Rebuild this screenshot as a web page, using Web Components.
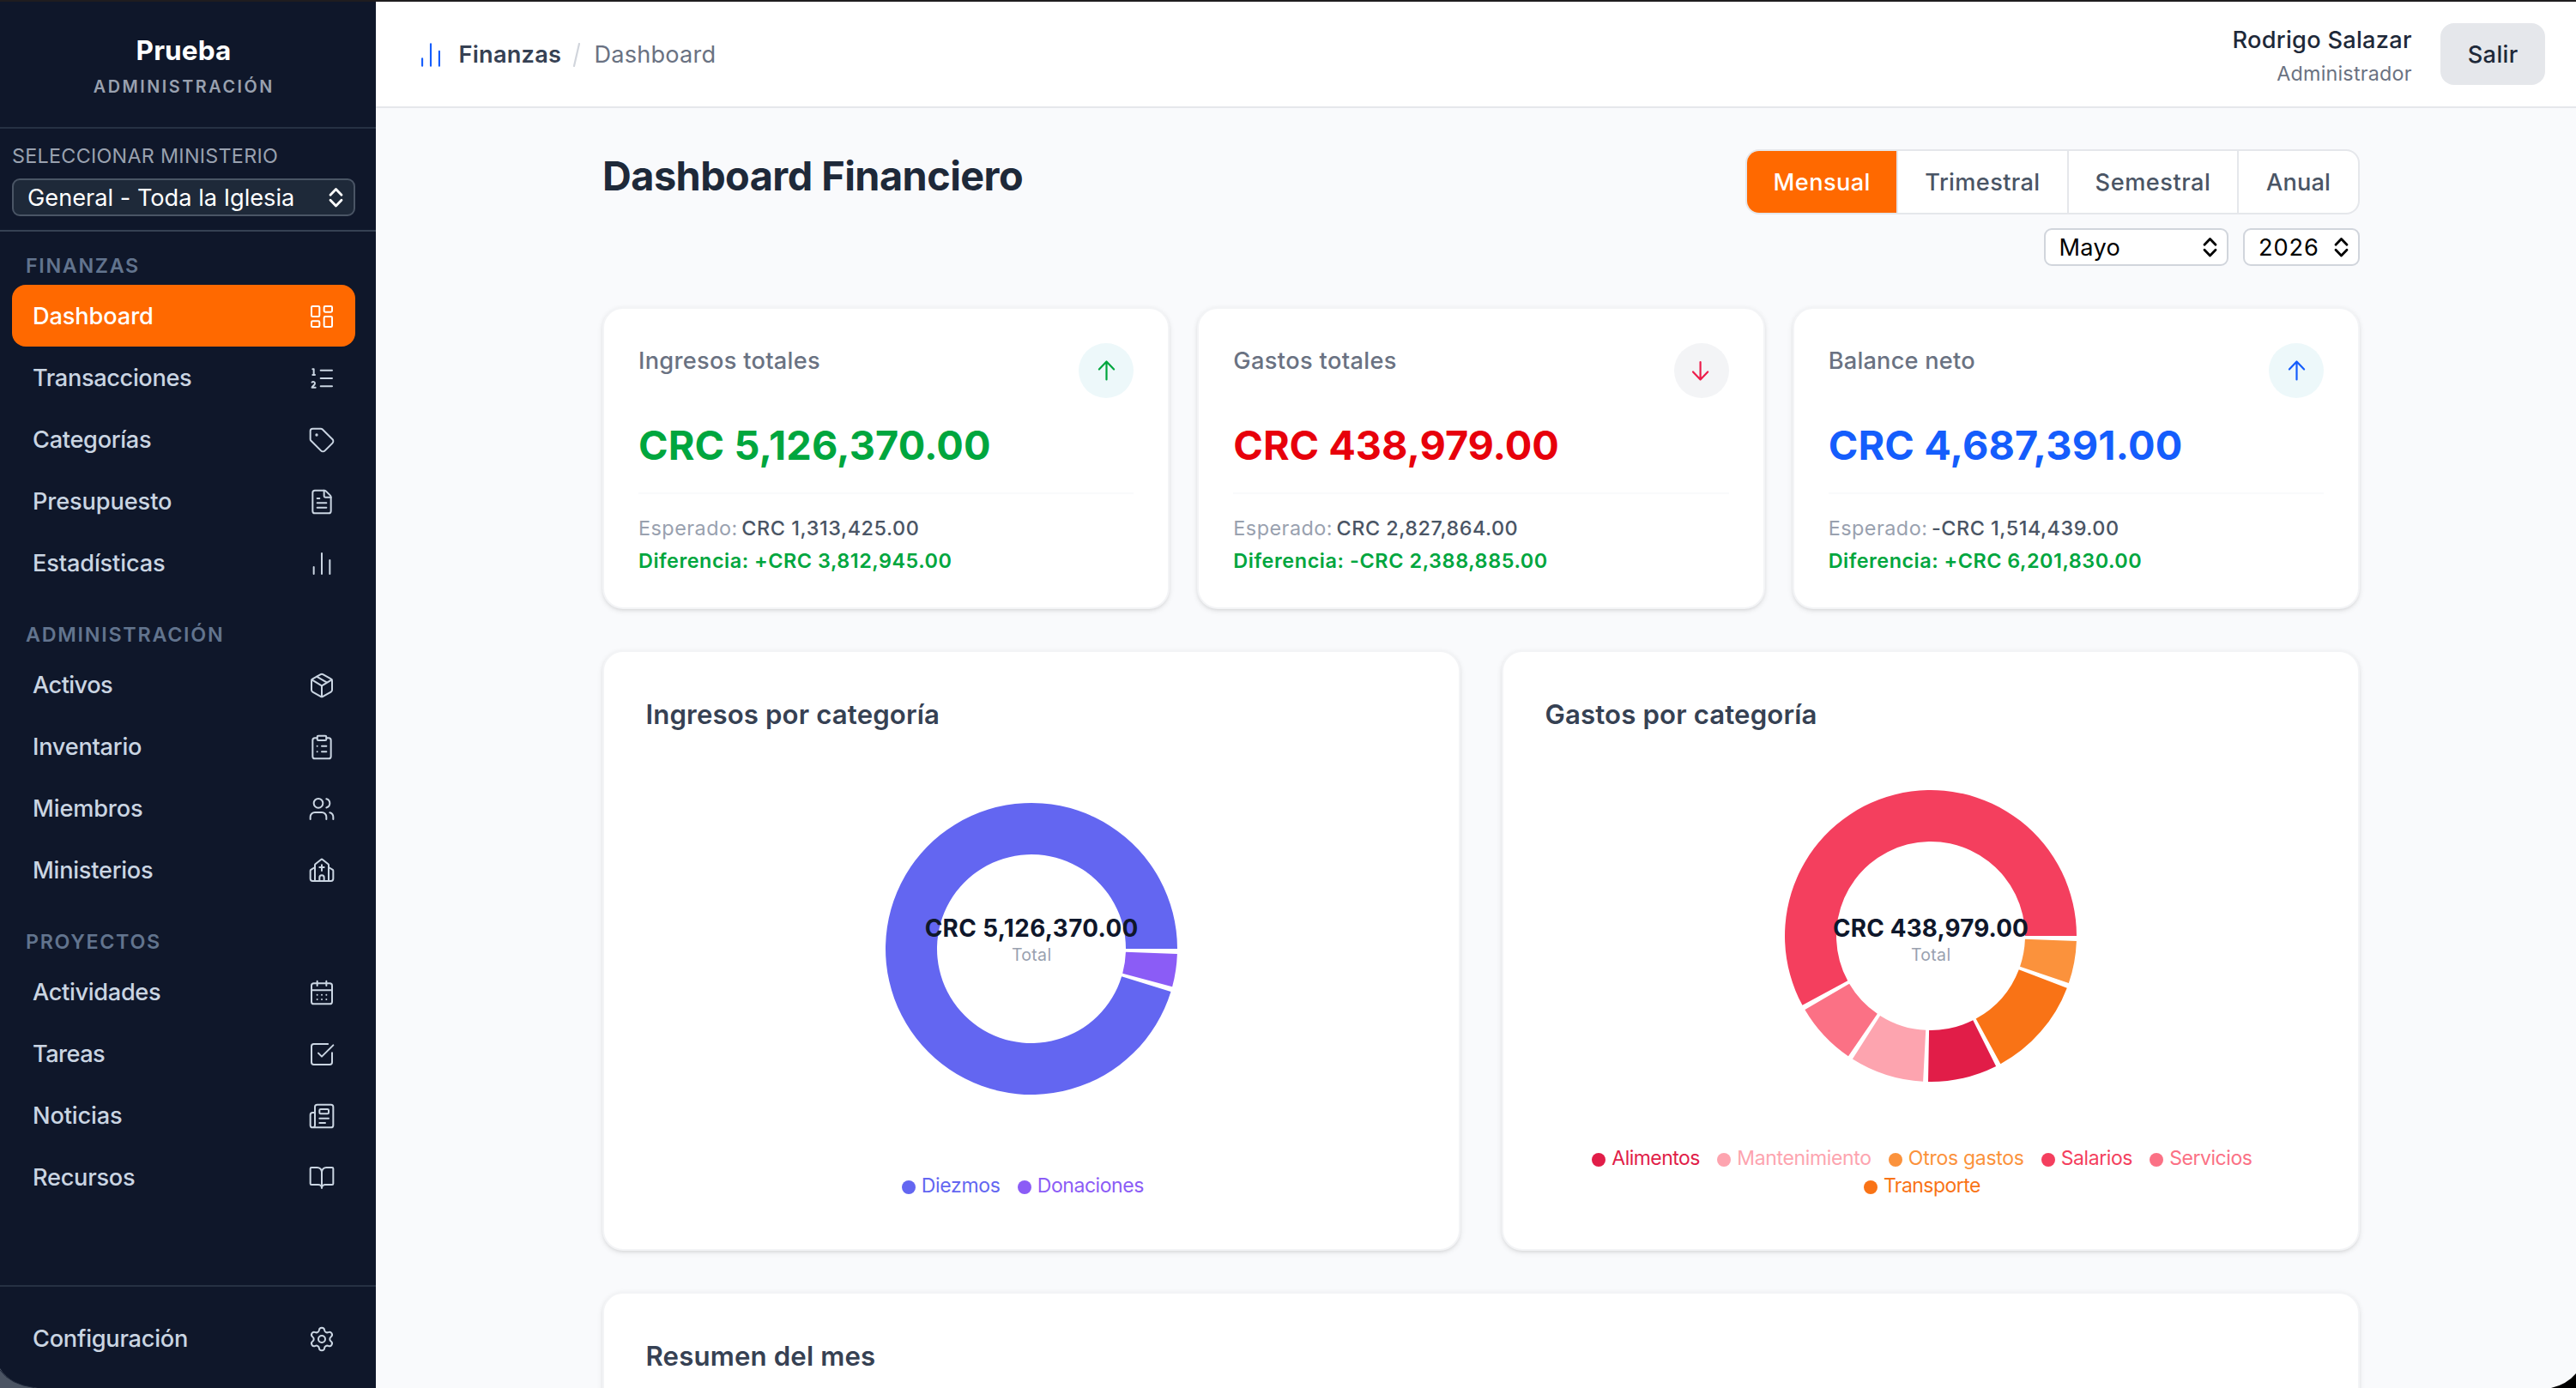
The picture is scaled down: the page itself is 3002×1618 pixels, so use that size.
<!DOCTYPE html>
<html lang="es">
<head>
<meta charset="utf-8">
<title>Dashboard Financiero</title>
<style>
html,body{margin:0;height:100%}
body{width:3002px;height:1618px;overflow:hidden;background:#f9fafc;font-family:Inter,"Liberation Sans",sans-serif;-webkit-font-smoothing:antialiased}
</style>
</head>
<body>
<app-shell>
  <side-bar slot="side"></side-bar>
  <top-bar slot="top"></top-bar>
  <finance-dashboard></finance-dashboard>
</app-shell>
<script>
const define = (name, css, html, after) => customElements.define(name, class extends HTMLElement {
  connectedCallback() {
    if (this.shadowRoot) return;
    const root = this.attachShadow({ mode: 'open' });
    root.innerHTML = `<style>*{box-sizing:border-box}${css}</style>` + (typeof html === 'function' ? html(this) : html);
    if (after) after(this, root);
  }
});

/* Tracks its text so that the inked width equals the w attribute. */
const pen = document.createElement('canvas').getContext('2d');
define('fit-text', ':host{display:inline-block;white-space:nowrap}', '<slot></slot>', el => {
  const cs = getComputedStyle(el), text = el.textContent;
  pen.font = `${cs.fontWeight} ${cs.fontSize} Inter`;
  const m = pen.measureText(text);
  const ink = m.actualBoundingBoxRight + m.actualBoundingBoxLeft;
  const ls = (Number(el.getAttribute('w')) - ink) / (text.length - 1);
  el.style.letterSpacing = ls.toFixed(3) + 'px';
  el.style.marginRight = (-ls).toFixed(3) + 'px';
});

const ICONS = {
  dashboard: '<rect width="7" height="9" x="3" y="3" rx="1"/><rect width="7" height="5" x="14" y="3" rx="1"/><rect width="7" height="9" x="14" y="12" rx="1"/><rect width="7" height="5" x="3" y="16" rx="1"/>',
  list: '<path d="M11 5h10M11 12h10M11 19h10M4 4h1v5M4 9h2M6.5 20H3.4c0-1 2.6-1.925 2.6-3.5a1.5 1.5 0 0 0-2.6-1.02"/>',
  tag: '<path d="M12.586 2.586A2 2 0 0 0 11.172 2H4a2 2 0 0 0-2 2v7.172a2 2 0 0 0 .586 1.414l8.704 8.704a2.426 2.426 0 0 0 3.42 0l6.58-6.58a2.426 2.426 0 0 0 0-3.42z"/><circle cx="7.5" cy="7.5" r=".5" fill="currentColor"/>',
  file: '<path d="M6 22a2 2 0 0 1-2-2V4a2 2 0 0 1 2-2h8a2.4 2.4 0 0 1 1.704.706l3.588 3.588A2.4 2.4 0 0 1 20 8v12a2 2 0 0 1-2 2z"/><path d="M14 2v5a1 1 0 0 0 1 1h5M10 9H8M16 13H8M16 17H8"/>',
  bars: '<path d="M5 21v-6M12 21V3M19 21V9"/>',
  box: '<path d="M11 21.73a2 2 0 0 0 2 0l7-4A2 2 0 0 0 21 16V8a2 2 0 0 0-1-1.73l-7-4a2 2 0 0 0-2 0l-7 4A2 2 0 0 0 3 8v8a2 2 0 0 0 1 1.73zM12 22V12"/><path d="m3.3 7 7.703 4.734a2 2 0 0 0 1.994 0L20.7 7M7.5 4.27l9 5.15"/>',
  clipboard: '<rect width="8" height="4" x="8" y="2" rx="1"/><path d="M16 4h2a2 2 0 0 1 2 2v14a2 2 0 0 1-2 2H6a2 2 0 0 1-2-2V6a2 2 0 0 1 2-2h2M12 11h4M12 16h4M8 11h.01M8 16h.01"/>',
  users: '<path d="M16 21v-2a4 4 0 0 0-4-4H6a4 4 0 0 0-4 4v2M16 3.128a4 4 0 0 1 0 7.744M22 21v-2a4 4 0 0 0-3-3.87"/><circle cx="9" cy="7" r="4"/>',
  church: '<path d="M10 9h4M12 7v5M14 21v-3a2 2 0 0 0-4 0v3M18 9l3.52 2.147a1 1 0 0 1 .48.854V19a2 2 0 0 1-2 2H4a2 2 0 0 1-2-2v-6.999a1 1 0 0 1 .48-.854L6 9"/><path d="M6 21V7a1 1 0 0 1 .376-.782l5-3.999a1 1 0 0 1 1.249.001l5 4A1 1 0 0 1 18 7v14"/>',
  calendar: '<path d="M8 2v4M16 2v4M3 10h18M8 14h.01M12 14h.01M16 14h.01M8 18h.01M12 18h.01M16 18h.01"/><rect width="18" height="18" x="3" y="4" rx="2"/>',
  check: '<path d="M21 10.656V19a2 2 0 0 1-2 2H5a2 2 0 0 1-2-2V5a2 2 0 0 1 2-2h12.344M9 11l3 3L22 4"/>',
  news: '<path d="M15 18h-5M18 14h-8M4 22h16a2 2 0 0 0 2-2V4a2 2 0 0 0-2-2H8a2 2 0 0 0-2 2v16a2 2 0 0 1-4 0v-9a2 2 0 0 1 2-2h2"/><rect width="8" height="4" x="10" y="6" rx="1"/>',
  book: '<path d="M12 7v14M3 18a1 1 0 0 1-1-1V4a1 1 0 0 1 1-1h5a4 4 0 0 1 4 4 4 4 0 0 1 4-4h5a1 1 0 0 1 1 1v13a1 1 0 0 1-1 1h-6a3 3 0 0 0-3 3 3 3 0 0 0-3-3z"/>',
  gear: '<path d="M9.671 4.136a2.34 2.34 0 0 1 4.659 0 2.34 2.34 0 0 0 3.319 1.915 2.34 2.34 0 0 1 2.33 4.033 2.34 2.34 0 0 0 0 3.831 2.34 2.34 0 0 1-2.33 4.033 2.34 2.34 0 0 0-3.319 1.915 2.34 2.34 0 0 1-4.659 0 2.34 2.34 0 0 0-3.32-1.915 2.34 2.34 0 0 1-2.33-4.033 2.34 2.34 0 0 0 0-3.831A2.34 2.34 0 0 1 6.35 6.051a2.34 2.34 0 0 0 3.319-1.915"/><circle cx="12" cy="12" r="3"/>'
};
define('line-icon', ':host{display:block;flex:none;width:32px;height:32px}svg{display:block;width:100%;height:100%;fill:none;stroke:currentColor;stroke-width:1.5;stroke-linecap:round;stroke-linejoin:round}',
  el => `<svg viewBox="0 0 24 24">${ICONS[el.getAttribute('name')]}</svg>`);

define('app-shell', `
:host{display:flex;flex-direction:column;width:3002px;height:1618px;overflow:hidden;border-top:2px solid #1f1d1f;box-sizing:border-box;position:relative}
.row{flex:1;display:flex;min-height:0}.col{flex:1;display:flex;flex-direction:column;min-width:0}
.corners{position:absolute;left:0;bottom:0;width:3002px;height:26px;display:block}`,
`<div class="row"><slot name="side"></slot><div class="col"><slot name="top"></slot><slot></slot></div></div>
<svg class="corners" viewBox="0 0 3002 26"><path d="M0 3Q12 23 44 26H0Z" fill="#4b5463"/><path d="M0 5Q12 22 40 25.5" fill="none" stroke="#1d2638" stroke-width="1"/><path d="M2973 26Q2991 22 3002 9V26Z" fill="#000"/></svg>`);

define('native-select', `
:host{display:flex;align-items:center;justify-content:space-between;height:44px;box-sizing:border-box;border:2px solid #d1d5dc;border-radius:9px;background:#fff;color:#000;font-size:27.2px;line-height:40px;padding:0 11px 0 16px}
:host([dark]){background:#1e2939;border-color:#4a5565;color:#fff;padding:0 12px 0 16px}
::slotted(fit-text){margin-top:1px}
svg{width:17px;height:24px;flex:none;fill:none;stroke:currentColor;stroke-width:2.8;stroke-linecap:round;stroke-linejoin:round}`,
'<slot></slot><svg viewBox="0 0 17 24"><path d="M2 9.300L8.500 2.500L15 9.300M2 15.300L8.500 22L15 15.300"/></svg>');

define('nav-item', `
:host{display:flex;align-items:center;justify-content:space-between;height:72px;box-sizing:border-box;padding:0 23px 0 24px;border-radius:16px;color:#cad5e2;font-size:27.2px;font-weight:500;line-height:40px}
:host([active]){background:#ff6900;color:#fff}
::slotted(fit-text){margin-top:1.500px}
line-icon{margin-top:1px}`,
el => `<slot></slot><line-icon name="${el.getAttribute('icon')}"></line-icon>`);

define('nav-group', `
:host{display:flex;flex-direction:column;padding:31.5px 24px 0 14px}
:host(:first-child){padding-top:23.500px}
.label{padding-left:16px;height:38.500px;font-size:23.300px;line-height:32px;font-weight:600;color:#62748e}`,
'<div class="label"><slot name="label"></slot></div><slot></slot>');

const NAV = [
  ['FINANZAS', 130, [['Dashboard', 137, 'dashboard', 'active'], ['Transacciones', 184, 'list'], ['Categorías', 137, 'tag'], ['Presupuesto', 160, 'file'], ['Estadísticas', 152, 'bars']]],
  ['ADMINISTRACIÓN', 228, [['Activos', 93, 'box'], ['Inventario', 125, 'clipboard'], ['Miembros', 126, 'users'], ['Ministerios', 138, 'church']]],
  ['PROYECTOS', 155, [['Actividades', 149, 'calendar'], ['Tareas', 83, 'check'], ['Noticias', 102, 'news'], ['Recursos', 117, 'book']]]
];
const navItem = ([t, w, i, a = '']) => `<nav-item icon="${i}" ${a}><fit-text w="${w}">${t}</fit-text></nav-item>`;

define('side-bar', `
:host{display:flex;flex-direction:column;flex:none;width:438px;background:#0f172a}
.brand{height:148px;border-bottom:2px solid #263143;padding-top:37px;padding-right:10px;display:flex;flex-direction:column;align-items:center}
.name{font-size:31.500px;line-height:40px;font-weight:700;color:#fff}
.role{margin:8px 2px 0 0;font-size:19.800px;line-height:28px;font-weight:600;color:#99a1af}
.picker{height:120px;border-bottom:2px solid #364153;padding:15.500px 24px 0 14px}
.cap{font-size:23.300px;line-height:32px;color:#99a1af;margin-bottom:10.500px;height:32px}
.foot{margin-top:auto;border-top:2px solid #263143;padding:24px 24px 22px 14px}`,
`<div class="brand"><div class="name"><fit-text w="107.500">Prueba</fit-text></div><div class="role"><fit-text w="207.500">ADMINISTRACIÓN</fit-text></div></div>
<div class="picker"><div class="cap"><fit-text w="308">SELECCIONAR MINISTERIO</fit-text></div><native-select dark><fit-text w="309">General - Toda la Iglesia</fit-text></native-select></div>
<nav>${NAV.map(([l, w, items]) => `<nav-group><fit-text slot="label" w="${w}">${l}</fit-text>${items.map(navItem).join('')}</nav-group>`).join('')}</nav>
<div class="foot">${navItem(['Configuración', 179, 'gear'])}</div>`);

define('top-bar', `
:host{display:flex;justify-content:space-between;flex:none;height:124px;box-sizing:border-box;border-bottom:2px solid #e5e7eb;background:#fff;padding:0 36px 0 47px;font-size:27.200px;line-height:40px}
.crumbs{display:flex;align-items:center;color:#6a7282}
.crumbs fit-text,.out fit-text{margin-top:1.500px}
line-icon{width:34px;height:34px;color:#155dfc;margin:1px 15.500px 0 0}
.sec{font-weight:600;color:#364153}.sep{width:8px;height:28px;margin:2px 16px 0 14.500px;display:block}
.me{display:flex;align-items:center}
.who{align-self:flex-start;margin:25px 33.500px 0 0;display:flex;flex-direction:column;align-items:flex-end;color:#1e2939;font-weight:500}
.who small{font-size:23.300px;line-height:38px;color:#6a7282;font-weight:400}
.out{width:122px;height:72px;border-radius:16px;background:#e5e7eb;color:#1e2939;font-weight:500;display:flex;align-items:center;justify-content:center}`,
`<div class="crumbs"><line-icon name="bars"></line-icon><fit-text class="sec" w="117.500">Finanzas</fit-text><svg class="sep" viewBox="0 0 8 28"><path d="M7 1L1 27" stroke="#d1d5dc" stroke-width="2.200" stroke-linecap="round"/></svg><fit-text w="138">Dashboard</fit-text></div>
<div class="me"><div class="who"><fit-text w="206.500">Rodrigo Salazar</fit-text><small><fit-text w="157.500">Administrador</fit-text></small></div><div class="out"><fit-text w="57">Salir</fit-text></div></div>`);

define('period-tabs', `
:host{display:flex;height:76px;width:716px;box-sizing:border-box;border:2px solid #e5e7eb;border-radius:16px;background:#fff;overflow:hidden;font-size:27.200px;font-weight:500;color:#4a5565}
div{display:flex;align-items:center;justify-content:center;border-left:2px solid #e5e7eb}
div:first-of-type{background:#ff6900;color:#fff;border:0}`,
`<div style="width:174px"><fit-text w="109">Mensual</fit-text></div><div style="width:198.500px"><fit-text w="131">Trimestral</fit-text></div><div style="width:198.500px"><fit-text w="131.500">Semestral</fit-text></div><div style="flex:1"><fit-text w="73">Anual</fit-text></div>`);

define('stat-card', `
:host{display:block;box-sizing:border-box;height:352px;border:2px solid #f3f4f6;border-radius:24px;background:#fff;padding:40px;box-shadow:0 2px 6px rgba(0,0,0,.1),0 2px 4px -2px rgba(0,0,0,.1)}
.top{display:flex;justify-content:space-between;height:64px;font-size:27.200px;line-height:41px;font-weight:500;color:#6a7282}
.dot{width:64px;height:64px;border-radius:50%;display:flex;align-items:center;justify-content:center}
.dot svg{width:24px;height:26px;fill:none;stroke:currentColor;stroke-width:2.200;stroke-linecap:round;stroke-linejoin:round}
.value{margin-top:23px;height:64px;line-height:64px;font-size:46.800px;font-weight:700}
hr{height:2px;border:0;background:#f9fafb;margin:23px 0 20.500px}
.line{height:38px;line-height:38px;font-size:23.400px;color:#99a1af;display:flex;gap:5px}
.line b{font-weight:500;color:#4a5565}.diff{font-weight:600;color:#00a63e}`,
el => {
  const a = n => el.getAttribute(n), [l, v, e, d] = a('widths').split(' ');
  const down = a('dir') === 'down';
  return `<div class="top"><fit-text w="${l}">${a('label')}</fit-text><div class="dot" style="background:${down ? '#f3f4f6' : '#edf8fa'};color:${a('arrow')}"><svg viewBox="0 0 24 26"><path d="${down ? 'M10.600 3V23.500M2 14.500L10.600 23.500L19.200 14.500' : 'M12.500 23.500V2.500M3.900 11.500L12.500 2.500L21.100 11.500'}"/></svg></div></div>
<div class="value" style="color:${a('tone')}"><fit-text w="${v}">${a('value')}</fit-text></div><hr>
<div class="line"><fit-text w="111.500">Esperado:</fit-text><b><fit-text w="${e}">${a('expected')}</fit-text></b></div>
<div class="line diff"><fit-text w="${d}">Diferencia: ${a('diff')}</fit-text></div>`;
});

define('panel-card', `
:host{display:flex;flex-direction:column;box-sizing:border-box;border:2px solid #f3f4f6;border-radius:24px;background:#fff;padding:48.500px 48px 58px;box-shadow:0 2px 6px rgba(0,0,0,.1),0 2px 4px -2px rgba(0,0,0,.1)}
.title{height:47.500px;line-height:48px;font-size:31.200px;font-weight:600;color:#364153;padding-left:.5px}`,
'<div class="title"><slot name="title"></slot></div><slot></slot>');

/* Ring chart: slices are "colour start end" in degrees, counter-clockwise from three o'clock. */
define('ring-chart', `
:host{display:grid;justify-items:center}
svg,.mid{grid-area:1/1}svg{display:block;width:344px}
.mid{margin-top:208px;display:flex;flex-direction:column;align-items:center;z-index:1}
.sum{font-size:27.800px;line-height:36px;font-weight:700;color:#0f172b}.tot{font-size:19.500px;line-height:26px;color:#99a1af}`,
el => {
  const h = Number(el.getAttribute('height')), p = (r, d) => `${(172 + r * Math.cos(d * Math.PI / 180)).toFixed(2)} ${(h / 2 - r * Math.sin(d * Math.PI / 180)).toFixed(2)}`;
  const arcs = el.getAttribute('slices').split(',').map(s => {
    const [c, a, b] = s.trim().split(' '), big = b - a > 180 ? 1 : 0;
    return `<path fill="${c}" d="M${p(170, a)}A170 170 0 ${big} 0 ${p(170, b)}L${p(110, b)}A110 110 0 ${big} 1 ${p(110, a)}Z"/>`;
  }).join('');
  return `<svg viewBox="0 0 344 ${h}" height="${h}">${arcs}</svg><div class="mid"><div class="sum"><fit-text w="${el.getAttribute('w')}">${el.getAttribute('total')}</fit-text></div><div class="tot"><fit-text w="45.500">Total</fit-text></div></div>`;
});

define('chart-legend', `
:host{display:flex;flex-wrap:wrap;justify-content:center;margin-top:auto;font-size:23px;line-height:32px}
span{display:flex;align-items:center;height:32px;margin-right:19.800px}
i{width:16px;height:16px;border-radius:50%;background:currentColor;margin:4px 7px 0 0}`,
el => el.getAttribute('items').split(',').map(s => {
  const [t, c, w] = s.split('|');
  return `<span style="color:${c}"><i></i><fit-text w="${w}">${t}</fit-text></span>`;
}).join(''));

define('finance-dashboard', `
:host{display:flex;flex-direction:column;flex:1;min-height:0;overflow:hidden;width:2048px;margin:0;padding:48px 252px 0 264px;gap:48px}
.head{display:flex;justify-content:space-between;height:136px;flex:none}
.h1{font-size:46.800px;line-height:64px;font-weight:700;color:#1e2939;margin:-1px 0 0 0}
.ctl{display:flex;flex-direction:column;gap:16px;align-items:flex-end}
.sel{display:flex;gap:17px}
.stats{display:grid;grid-template-columns:repeat(3,1fr);gap:32px;flex:none}
.charts{display:grid;grid-template-columns:1fr 1fr;gap:48px;flex:none;height:700px}
.sum{flex:none;height:400px}`,
`<div class="head"><div class="h1"><fit-text w="486">Dashboard Financiero</fit-text></div>
<div class="ctl"><period-tabs></period-tabs><div class="sel"><native-select style="width:215.500px"><fit-text w="68">Mayo</fit-text></native-select><native-select style="width:136px"><fit-text w="67">2026</fit-text></native-select></div></div></div>
<div class="stats">
<stat-card label="Ingresos totales" value="CRC 5,126,370.00" expected="CRC 1,313,425.00" diff="+CRC 3,812,945.00" tone="#00a63e" arrow="#00a63e" widths="209 407 204.500 363.500"></stat-card>
<stat-card label="Gastos totales" value="CRC 438,979.00" expected="CRC 2,827,864.00" diff="-CRC 2,388,885.00" tone="#e7000b" arrow="#ec1c4a" dir="down" widths="188.500 376 209 364.500"></stat-card>
<stat-card label="Balance neto" value="CRC 4,687,391.00" expected="-CRC 1,514,439.00" diff="+CRC 6,201,830.00" tone="#155dfc" arrow="#155dfc" widths="168.500 409 216 363.500"></stat-card>
</div>
<div class="charts">
<panel-card><fit-text slot="title" w="338.500">Ingresos por categoría</fit-text>
<ring-chart height="500" total="CRC 5,126,370.00" w="247" slices="#6366f1 0 342.9,#8b5cf6 344.9 358"></ring-chart>
<chart-legend items="Diezmos|#6366f1|89,Donaciones|#8b5cf6|121.5"></chart-legend></panel-card>
<panel-card><fit-text slot="title" w="314">Gastos por categoría</fit-text>
<ring-chart height="470" total="CRC 438,979.00" w="226" slices="#f43f5e 0 208.4,#fb7185 210.4 235.6,#fda4af 237.6 267,#e11d48 269 296.6,#f97316 298.6 339.1,#fb923c 341.1 358"></ring-chart>
<chart-legend items="Alimentos|#e11d48|102,Mantenimiento|#fda4af|154,Otros gastos|#fb923c|133,Salarios|#f43f5e|81.5,Servicios|#fb7185|94.5,Transporte|#f97316|112"></chart-legend></panel-card>
</div>
<panel-card class="sum"><fit-text slot="title" w="264.500">Resumen del mes</fit-text></panel-card>`);
</script>
</body>
</html>
